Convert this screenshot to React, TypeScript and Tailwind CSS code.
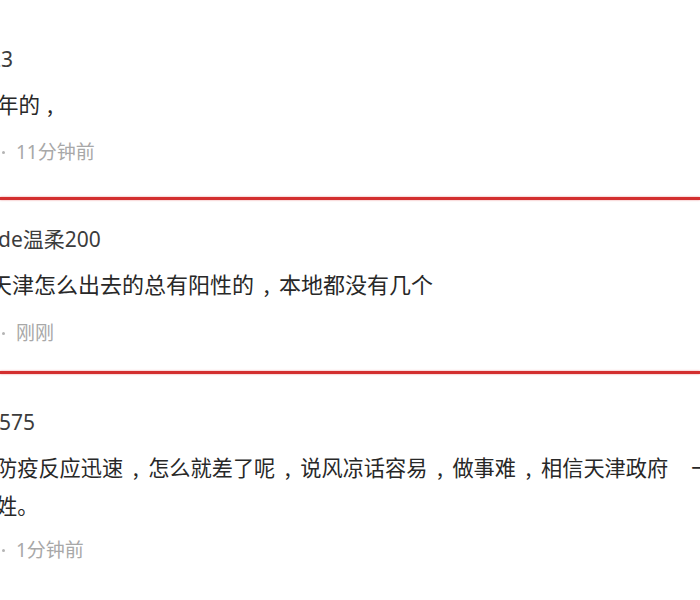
const CJK = "font-['Noto_Sans_CJK_SC','Microsoft_YaHei',sans-serif]";
const MIXED = "font-['Noto_Sans','Noto_Sans_CJK_SC',sans-serif]";

// the source draws its commas centred in a wide slot
function Comma() {
  return <span className="inline-block w-[25px] text-center">,</span>;
}

function Meta({ time }: { time: string }) {
  return (
    <div className={`flex h-[36px] items-center whitespace-nowrap text-[19px] leading-[36px] text-[#a8a8a8] ${MIXED}`}>
      <span className="ml-[2px] h-[3px] w-[3px] rounded-full bg-[#b4b4b4]" />
      <span className="ml-[11px]">{time}</span>
    </div>
  );
}

function Name({ children, className }: { children: string; className: string }) {
  return (
    <div className={`h-[36px] whitespace-nowrap text-[21px] leading-[36px] text-[#3c3c3c] ${MIXED} ${className}`}>
      {children}
    </div>
  );
}

export default function App() {
  return (
    <div className={`h-[600px] w-[700px] overflow-hidden bg-white ${CJK}`}>
      {/* comment 1 */}
      <div className="pt-[41px] pb-[27px]">
        <Name className="-ml-[11px]">23</Name>
        <div className="mt-[8px] -ml-[3px] h-[38px] whitespace-nowrap text-[21.5px] leading-[38px] text-[#282828]">
          年的<span className="inline-block w-[20px] text-center">,</span>
        </div>
        <div className="mt-[11px]">
          <Meta time="11分钟前" />
        </div>
      </div>

      <div className="h-[3px] bg-[#d32f2f] shadow-[0_0_2px_rgba(214,48,48,0.6)]" />

      {/* comment 2 */}
      <div className="pt-[21px] pb-[20px]">
        <Name className="-ml-[2px]">de温柔200</Name>
        <div className="mt-[7px] -ml-[10px] h-[38px] whitespace-nowrap text-[22px] leading-[38px] text-[#282828]">
          天津怎么出去的总有阳性的<Comma />本地都没有几个
        </div>
        <div className="mt-[13px]">
          <Meta time="刚刚" />
        </div>
      </div>

      <div className="h-[3px] bg-[#d32f2f] shadow-[0_0_2px_rgba(214,48,48,0.6)]" />

      {/* comment 3 */}
      <div className="pt-[30px]">
        <Name className="-ml-[1px]">575</Name>
        <div className="mt-[8px] -ml-[4px] whitespace-nowrap text-[21.2px] leading-[38px] text-[#282828]">
          <div>
            防疫反应迅速<Comma />怎么就差了呢<Comma />说风凉话容易<Comma />做事难<Comma />相信天津政府
            <span className="inline-block w-[23px]" />一定能保护好百
          </div>
          <div>姓。</div>
        </div>
        <div className="mt-[8px]">
          <Meta time="1分钟前" />
        </div>
      </div>
    </div>
  );
}
